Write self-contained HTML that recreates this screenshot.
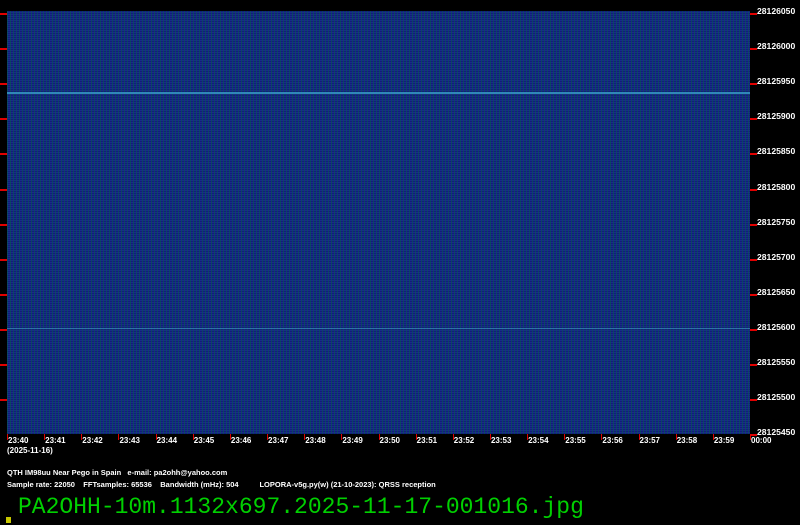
<!DOCTYPE html>
<html><head><style>
body{margin:0;width:800px;height:525px;background:#000;position:relative;overflow:hidden;font-family:"Liberation Sans",sans-serif}
.plot{position:absolute;left:7px;top:11px;width:743px;height:423px;background-color:#1a2c88;
background-image:repeating-linear-gradient(90deg,rgba(0,100,70,.5) 0 1px,transparent 1px 3px),repeating-linear-gradient(0deg,rgba(10,20,110,.55) 0 1px,transparent 1px 2px)}
.t{position:absolute;background:#e00000}
.r{position:absolute;left:757px;color:#fff;font-size:8.6px;font-weight:bold}
.b{position:absolute;top:436px;color:#fff;font-size:8px;font-weight:bold}
.f{position:absolute;left:7px;color:#fff;font-size:7.5px;font-weight:bold;white-space:pre}
</style></head><body>
<div class="plot"></div>
<div style="position:absolute;left:7px;top:92px;width:743px;height:2px;background:#3088b8"></div>
<div style="position:absolute;left:7px;top:328px;width:743px;height:1px;background:#3070a8"></div>
<div id="c"></div>
<div class="f" style="top:468px">QTH IM98uu Near Pego in Spain   e-mail: pa2ohh@yahoo.com</div>
<div class="f" style="top:480px">Sample rate: 22050    FFTsamples: 65536    Bandwidth (mHz): 504          LOPORA-v5g.py(w) (21-10-2023): QRSS reception</div>
<div class="b" style="left:7px;top:446px">(2025-11-16)</div>
<div style="position:absolute;left:18px;top:494px;color:#00d000;font-family:'Liberation Mono',monospace;font-size:23px">PA2OHH-10m.1132x697.2025-11-17-001016.jpg</div>
<div style="position:absolute;left:6px;top:517px;width:5px;height:6px;background:#c8c800"></div>
<script>
var c=document.getElementById('c'),h='';
var f=['28126050','28126000','28125950','28125900','28125850','28125800','28125750','28125700','28125650','28125600','28125550','28125500','28125450'];
for(var i=0;i<13;i++){var y=13+i*35.1;
if(i<12)h+='<div class="t" style="left:0;top:'+y+'px;width:7px;height:2px"></div>';
h+='<div class="t" style="left:750px;top:'+y+'px;width:7px;height:2px"></div>';
h+='<div class="r" style="top:'+(y-7)+'px">'+f[i]+'</div>';}
for(var j=0;j<=20;j++){var x=7+j*37.15;
h+='<div class="t" style="left:'+x+'px;top:434px;width:1px;height:6px"></div>';
var m=j==20?'00:00':'23:'+(40+j);
h+='<div class="b" style="left:'+(x+1)+'px">'+m+'</div>';}
h+='<div class="t" style="left:750px;top:434px;width:7px;height:2px"></div>';
c.innerHTML=h;
</script>
</body></html>
